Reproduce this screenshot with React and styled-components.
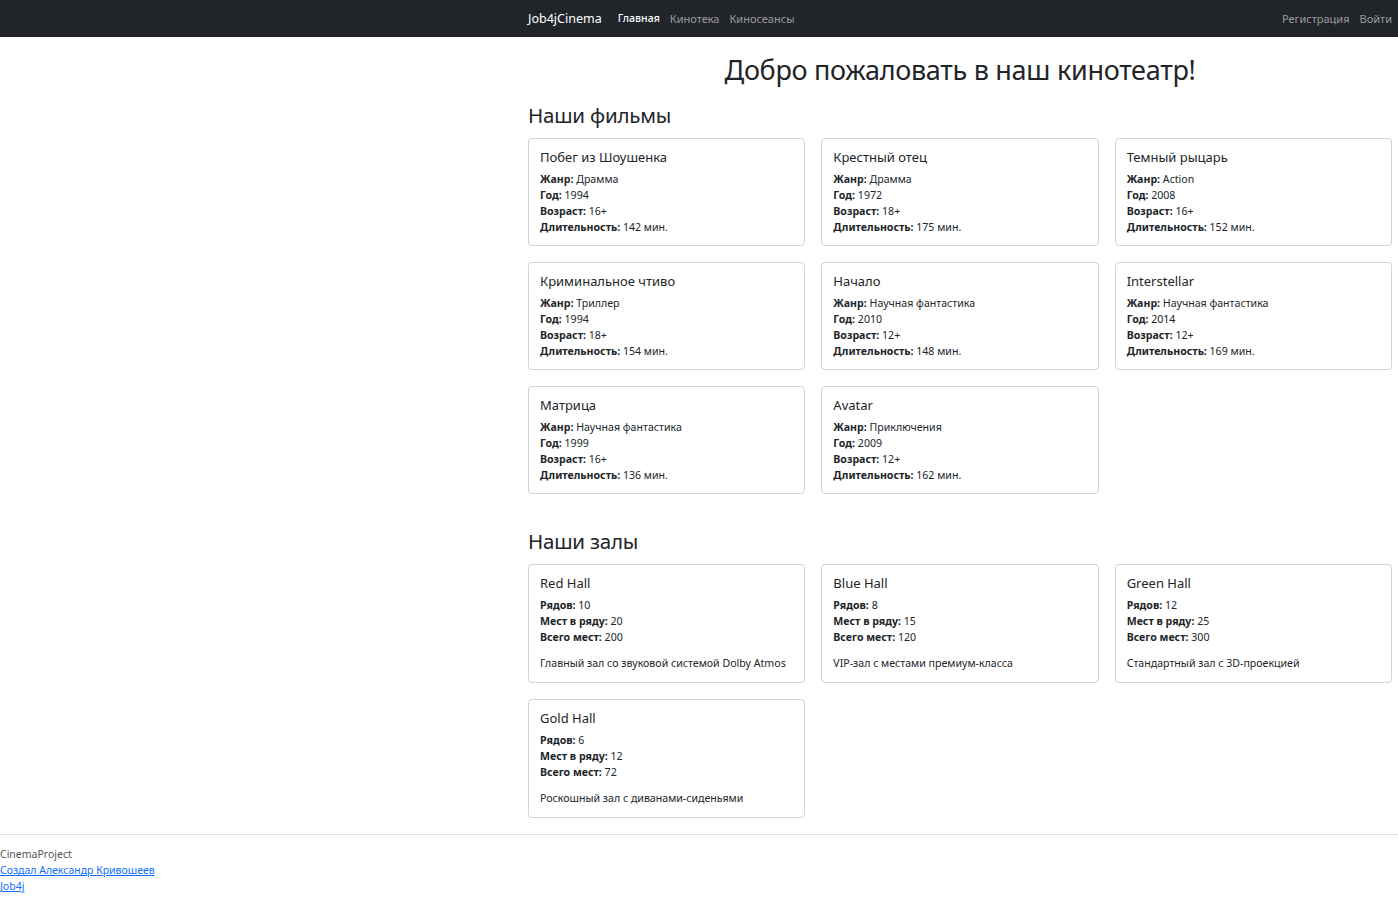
import React from "react";
import styled, { createGlobalStyle } from "styled-components";

const GlobalStyle = createGlobalStyle`
  html, body {
    margin: 0;
    padding: 0;
    background: #fff;
    font-family: "Noto Sans", "Open Sans", sans-serif;
    color: #212529;
  }
  * { box-sizing: border-box; }
`;

const films = [
    { name: "Побег из Шоушенка", genre: "Драмма", year: 1994, age: "16+", duration: 142 },
    { name: "Крестный отец", genre: "Драмма", year: 1972, age: "18+", duration: 175 },
    { name: "Темный рыцарь", genre: "Action", year: 2008, age: "16+", duration: 152 },
    { name: "Криминальное чтиво", genre: "Триллер", year: 1994, age: "18+", duration: 154 },
    { name: "Начало", genre: "Научная фантастика", year: 2010, age: "12+", duration: 148 },
    { name: "Interstellar", genre: "Научная фантастика", year: 2014, age: "12+", duration: 169 },
    { name: "Матрица", genre: "Научная фантастика", year: 1999, age: "16+", duration: 136 },
    { name: "Avatar", genre: "Приключения", year: 2009, age: "12+", duration: 162 },
];

const halls = [
    { name: "Red Hall", rows: 10, places: 20, total: 200, description: "Главный зал со звуковой системой Dolby Atmos" },
    { name: "Blue Hall", rows: 8, places: 15, total: 120, description: "VIP-зал с местами премиум-класса" },
    { name: "Green Hall", rows: 12, places: 25, total: 300, description: "Стандартный зал с 3D-проекцией" },
    { name: "Gold Hall", rows: 6, places: 12, total: 72, description: "Роскошный зал с диванами-сиденьями" },
];

const Navbar = styled.nav`
    height: 37px;
    background: #212529;
    display: flex;
    align-items: center;
    padding: 0 6px 0 528px;
`;

const Brand = styled.a`
    color: #fff;
    font-size: 12.5px;
    margin-right: 16px;
    text-decoration: none;
`;

const NavLinks = styled.div`
    display: flex;
    gap: 10px;
    flex: ${(p) => (p.$grow ? 1 : "none")};
`;

const NavLink = styled.a`
    color: ${(p) => (p.$active ? "#fff" : "rgba(255,255,255,0.55)")};
    font-size: ${(p) => (p.$active ? 10.5 : 11)}px;
    font-weight: ${(p) => (p.$active ? 500 : 400)};
    text-decoration: none;
`;

const Main = styled.main`
    width: 864px;
    margin-left: 528px;
    padding-bottom: 16px;
`;

const Title = styled.h1`
    margin: 0;
    padding-top: 15px;
    text-align: center;
    font-size: 27px;
    font-weight: 400;
    line-height: 36px;
    letter-spacing: -0.3px;
`;

const SectionTitle = styled.h2`
    margin: ${(p) => p.$top}px 0 0 0;
    font-size: 20.5px;
    font-weight: 400;
    line-height: 26px;
    letter-spacing: -0.2px;
`;

const Grid = styled.div`
    display: grid;
    grid-template-columns: repeat(3, 1fr);
    column-gap: 16px;
    row-gap: 16px;
    margin-top: 10px;
`;

const Card = styled.div`
    border: 1px solid rgba(0, 0, 0, 0.175);
    border-radius: 4px;
    padding: 8px 11px 9px;
    min-height: ${(p) => p.$minHeight}px;
`;

const CardTitle = styled.h5`
    margin: 0 0 3px 0;
    font-size: 13px;
    font-weight: 400;
    line-height: 21px;
`;

const Line = styled.div`
    font-size: 10.6px;
    line-height: 16px;
    b { font-weight: 700; }
`;

const Description = styled.p`
    margin: 10px 0 0 0;
    font-size: 10.6px;
    line-height: 16px;
`;

const Footer = styled.footer`
    border-top: 1px solid #dee2e6;
    padding-top: 11px;
    font-size: 10.5px;
    line-height: 16px;
    color: #555;
`;

const FooterLink = styled.a`
    display: block;
    color: #0d6efd;
    text-decoration: underline;
`;

const FilmCard = ({ film }) => (
    <Card $minHeight={108}>
        <CardTitle>{film.name}</CardTitle>
        <Line><b>Жанр:</b> {film.genre}</Line>
        <Line><b>Год:</b> {film.year}</Line>
        <Line><b>Возраст:</b> {film.age}</Line>
        <Line><b>Длительность:</b> {film.duration} мин.</Line>
    </Card>
);

const HallCard = ({ hall }) => (
    <Card $minHeight={119}>
        <CardTitle>{hall.name}</CardTitle>
        <Line><b>Рядов:</b> {hall.rows}</Line>
        <Line><b>Мест в ряду:</b> {hall.places}</Line>
        <Line><b>Всего мест:</b> {hall.total}</Line>
        <Description>{hall.description}</Description>
    </Card>
);

const App = () => {
    return (
        <>
            <GlobalStyle />
            <Navbar>
                <Brand href="#">Job4jCinema</Brand>
                <NavLinks $grow>
                    <NavLink $active href="#">Главная</NavLink>
                    <NavLink href="#">Кинотека</NavLink>
                    <NavLink href="#">Киносеансы</NavLink>
                </NavLinks>
                <NavLinks>
                    <NavLink href="#">Регистрация</NavLink>
                    <NavLink href="#">Войти</NavLink>
                </NavLinks>
            </Navbar>
            <Main>
                <Title>Добро пожаловать в наш кинотеатр!</Title>
                <SectionTitle $top={14}>Наши фильмы</SectionTitle>
                <Grid>
                    {films.map((film) => <FilmCard film={film} key={film.name} />)}
                </Grid>
                <SectionTitle $top={34}>Наши залы</SectionTitle>
                <Grid>
                    {halls.map((hall) => <HallCard hall={hall} key={hall.name} />)}
                </Grid>
            </Main>
            <Footer>
                <div>CinemaProject</div>
                <FooterLink href="#">Создал Александр Кривошеев</FooterLink>
                <FooterLink href="#">Job4j</FooterLink>
            </Footer>
        </>
    );
};

export default App;
